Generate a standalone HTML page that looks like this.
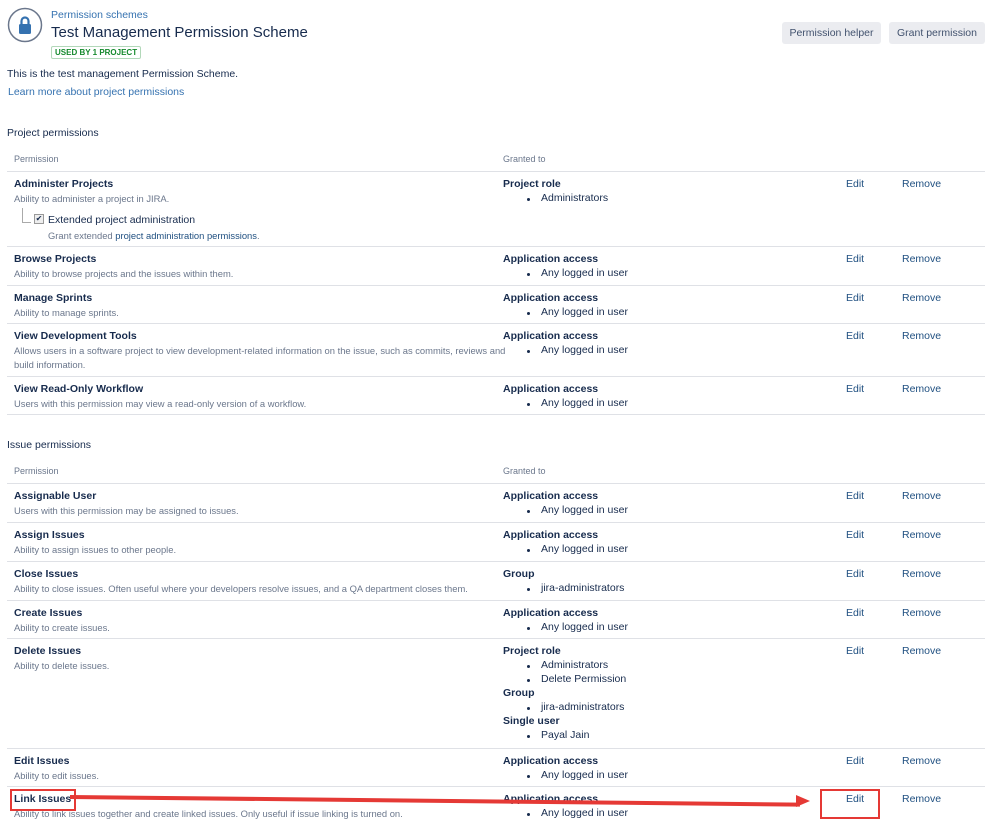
<!DOCTYPE html>
<html><head><meta charset="utf-8">
<style>
body{margin:0;width:999px;height:817px;overflow:hidden;background:#fff;font-family:"Liberation Sans",sans-serif;color:#172b4d;position:relative}
.a{position:absolute;white-space:nowrap}
.t{font-size:10.5px;font-weight:bold;color:#172b4d}
.d{font-size:9.4px;color:#6b778c}
.h{font-size:9px;color:#6b778c}
.l{font-size:10.5px;color:#205081}
.g{font-size:10.5px;color:#172b4d}
.ln{position:absolute;left:7px;width:978px;height:1px;background:#dfe1e6}
.bl{position:absolute;width:3px;height:3px;border-radius:50%;background:#172b4d}
.btn{position:absolute;top:22px;height:22px;background:#ebecf0;border-radius:3px;font-size:10.5px;color:#42526e;line-height:22px;text-align:center}
</style></head><body>
<svg class="a" style="left:7px;top:7px" width="36" height="36" viewBox="0 0 36 36"><circle cx="18" cy="18" r="16.5" fill="#fff" stroke="#6b778c" stroke-width="1.5"/><rect x="12" y="17" width="12" height="10" rx="1.5" fill="#3572b0"/><path d="M14.5 17v-3a3.5 3.5 0 0 1 7 0v3" fill="none" stroke="#3572b0" stroke-width="2.2"/></svg>
<div class="a l" style="left:51px;top:9px;font-size:10.5px;color:#3572b0">Permission schemes</div>
<div class="a" style="left:51px;top:24px;font-size:15px;color:#172b4d">Test Management Permission Scheme</div>
<div class="a" style="left:51px;top:46px;font-size:8px;font-weight:bold;color:#14892c;border:1px solid #b2d8b9;border-radius:2px;padding:1px 3px">USED BY 1 PROJECT</div>
<div class="a" style="left:7px;top:68px;font-size:10.5px">This is the test management Permission Scheme.</div>
<div class="a" style="left:8px;top:86px;font-size:10.5px;color:#3572b0">Learn more about project permissions</div>
<div class="btn" style="left:782px;width:99px">Permission helper</div>
<div class="btn" style="left:889px;width:96px">Grant permission</div>
<div class="a" style="left:7px;top:127px;font-size:10.5px">Project permissions</div>
<div class="a h" style="left:14px;top:154px">Permission</div><div class="a h" style="left:503px;top:154px">Granted to</div>
<div class="a" style="left:7px;top:439px;font-size:10.5px">Issue permissions</div>
<div class="a h" style="left:14px;top:466px">Permission</div><div class="a h" style="left:503px;top:466px">Granted to</div>
<div id="rows"></div>
<div class="a" style="left:22px;top:208px;width:8px;height:14px;border-left:1px solid #aaa;border-bottom:1px solid #aaa"></div>
<div class="a" style="left:34px;top:214px;width:8px;height:8px;border:1px solid #999;background:#eee;font-size:8px;line-height:8px;text-align:center">✔</div>
<div class="a" style="left:48px;top:214px;font-size:10.5px">Extended project administration</div>
<div class="a d" style="left:48px;top:230px">Grant extended <span style="color:#205081">project administration permissions</span>.</div>
<div class="a" style="left:10px;top:789px;width:62px;height:18px;border:2px solid #e53935"></div>
<div class="a" style="left:820px;top:789px;width:56px;height:26px;border:2px solid #e53935"></div>
<div class="a" style="left:70px;top:795px;width:730px;height:4px;background:#e53935;transform:rotate(0.6deg);transform-origin:left"></div>
<svg class="a" style="left:796px;top:795px" width="14" height="12"><path d="M0 0L14 6L0 12Z" fill="#e53935"/></svg>
<script>
var R=[
[171,"Administer Projects","Ability to administer a project in JIRA.",[["Project role",["Administrators"]]]],
[246,"Browse Projects","Ability to browse projects and the issues within them.",[["Application access",["Any logged in user"]]]],
[285,"Manage Sprints","Ability to manage sprints.",[["Application access",["Any logged in user"]]]],
[323,"View Development Tools","Allows users in a software project to view development-related information on the issue, such as commits, reviews and<br>build information.",[["Application access",["Any logged in user"]]]],
[376,"View Read-Only Workflow","Users with this permission may view a read-only version of a workflow.",[["Application access",["Any logged in user"]]],414],
[483,"Assignable User","Users with this permission may be assigned to issues.",[["Application access",["Any logged in user"]]]],
[522,"Assign Issues","Ability to assign issues to other people.",[["Application access",["Any logged in user"]]]],
[561,"Close Issues","Ability to close issues. Often useful where your developers resolve issues, and a QA department closes them.",[["Group",["jira-administrators"]]]],
[600,"Create Issues","Ability to create issues.",[["Application access",["Any logged in user"]]]],
[638,"Delete Issues","Ability to delete issues.",[["Project role",["Administrators","Delete Permission"]],["Group",["jira-administrators"]],["Single user",["Payal Jain"]]]],
[748,"Edit Issues","Ability to edit issues.",[["Application access",["Any logged in user"]]]],
[786,"Link Issues","Ability to link issues together and create linked issues. Only useful if issue linking is turned on.",[["Application access",["Any logged in user"]]]]
];
var h="";
R.forEach(function(r){var y=r[0];
h+='<div class="ln" style="top:'+y+'px"></div>';
if(r[4])h+='<div class="ln" style="top:'+r[4]+'px"></div>';
h+='<div class="a t" style="left:14px;top:'+(y+7)+'px">'+r[1]+'</div>';
h+='<div class="a d" style="left:14px;top:'+(y+21)+'px;line-height:14px">'+r[2]+'</div>';
var gy=y+7;
r[3].forEach(function(g){h+='<div class="a t" style="left:503px;top:'+gy+'px">'+g[0]+'</div>';gy+=14;
g[1].forEach(function(s){h+='<div class="bl" style="left:527px;top:'+(gy+6)+'px"></div><div class="a g" style="left:541px;top:'+gy+'px">'+s+'</div>';gy+=14;});});
h+='<div class="a l" style="left:846px;top:'+(y+7)+'px">Edit</div><div class="a l" style="left:902px;top:'+(y+7)+'px">Remove</div>';
});
document.getElementById("rows").innerHTML=h;
</script>
</body></html>
